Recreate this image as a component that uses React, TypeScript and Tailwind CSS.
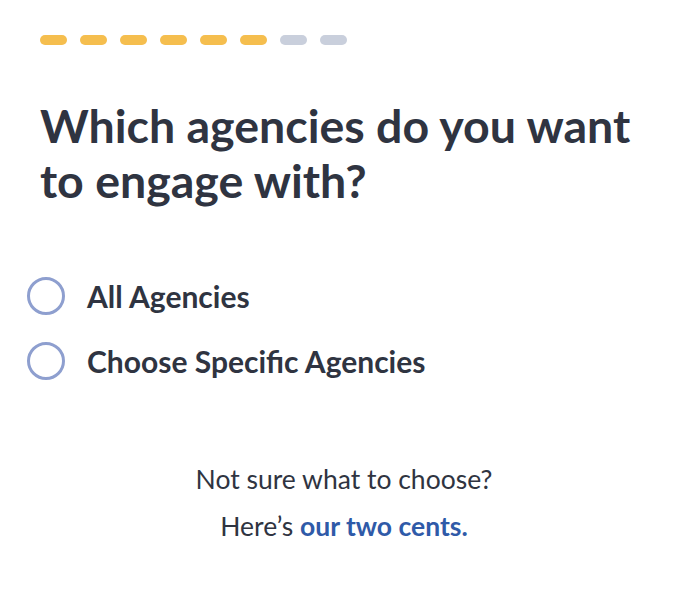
export default function App() {
  const dashes = [1, 1, 1, 1, 1, 1, 0, 0];
  return (
    <div className="w-[688px] h-[592px] bg-white text-[#2f3441]" style={{ fontFamily: "Lato, 'Noto Sans', sans-serif" }}>
      <div className="flex gap-[13px] pl-[40px] pt-[35px]">
        {dashes.map((d, i) => (
          <div key={i} className={`w-[27px] h-[10px] rounded-full ${d ? "bg-[#f5be4e]" : "bg-[#c9cfdc]"}`} />
        ))}
      </div>
      <h1 className="pl-[40px] pt-[53px] text-[46.5px] leading-[55px] font-bold">
        Which agencies do you want
        <br />
        to engage with?
      </h1>
      <div className="flex flex-col gap-[27px] pl-[27px] pt-[69px]">
        {["All Agencies", "Choose Specific Agencies"].map((t) => (
          <div key={t} className="flex items-center gap-[22px]">
            <div className="w-[38px] h-[38px] rounded-full border-[3px] border-[#8e9fcf]" />
            <span className="text-[30px] font-bold leading-[38px]">{t}</span>
          </div>
        ))}
      </div>
      <div className="flex flex-col items-center pt-[76px] text-[26.5px] leading-[47px]">
        <p>Not sure what to choose?</p>
        <p>
          Here’s <span className="font-bold text-[#2f5aa8]">our two cents.</span>
        </p>
      </div>
    </div>
  );
}
